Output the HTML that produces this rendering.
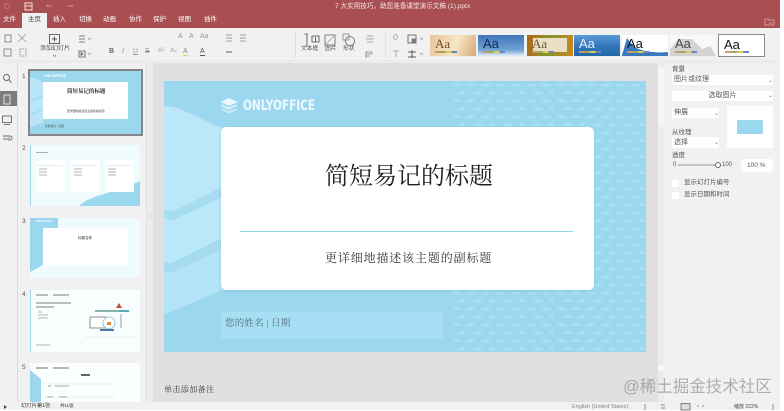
<!DOCTYPE html>
<html><head><meta charset="utf-8">
<style>
*{box-sizing:border-box}
html,body{margin:0;padding:0;width:784px;height:411px;overflow:hidden;background:#fff}
body{position:relative;font-family:"Liberation Sans","Noto Sans CJK SC",sans-serif;color:#444}
div,span,svg{position:absolute}
#w{left:0;top:0;width:784px;height:411px;overflow:hidden;filter:blur(.3px)}
.t{white-space:nowrap;line-height:1}
.tab{top:16px;font-size:6.5px;color:#fff;white-space:nowrap;line-height:8px}
.tl{font-size:6.5px;color:#555;white-space:nowrap;line-height:8px}
.th{top:35px;width:46px;height:21px;overflow:hidden}
.aa{left:5px;top:2px;font-size:13px;line-height:14px;color:#111}
.bar{height:2px;left:5px;width:22px;top:16px;background:linear-gradient(90deg,#c96 0 25%,#9a6 25% 50%,#dc5 50% 75%,#68b 75%)}
.dd{background:#fff;height:11px;font-size:7px;line-height:11px;color:#555;padding-left:2px;white-space:nowrap}
.chev{font-size:6px;color:#777;line-height:8px}
.card{background:#fff}
svg{overflow:visible}
</style></head><body><div id="w">

<!-- Header -->
<div style="left:0;top:0;width:780px;height:28px;background:#a94f51"></div>
<div style="left:22px;top:13px;width:25px;height:15px;background:#f1f1f1"></div>
<div class="tab" style="left:3px">文件</div>
<div class="tab" style="left:28px;color:#444">主页</div>
<div class="tab" style="left:53px">插入</div>
<div class="tab" style="left:79px">切换</div>
<div class="tab" style="left:103px">动画</div>
<div class="tab" style="left:129px">协作</div>
<div class="tab" style="left:153px">保护</div>
<div class="tab" style="left:178px">视图</div>
<div class="tab" style="left:204px">插件</div>
<div class="t" style="left:335px;top:3px;width:130px;font-size:6.6px;line-height:7px;color:#f6e6e6">7 大实用技巧，助您准备课堂演示文稿 (1).pptx</div>
<svg style="left:0;top:0" width="90" height="14" fill="none" stroke="#e6c9c9" stroke-width="1">
<circle cx="7" cy="6" r="2.5" stroke="#bf7b7c"/>
<rect x="25" y="3" width="7" height="7" stroke="#f3e2e2"/><path d="M25 6h7" stroke="#f3e2e2"/>
<path d="M46 6h6M46 6l2-1" stroke="#c98e8f"/><path d="M73 6h-6M73 6l-2-1" stroke="#c98e8f"/>
</svg>
<svg style="left:764px;top:18px" width="12" height="8" fill="none" stroke="#d9b2b2" stroke-width=".8"><path d="M1 1h3l1 1h5v5H1z"/><path d="M5 5h3"/></svg>

<!-- Toolbar -->
<div style="left:0;top:28px;width:780px;height:34px;background:#f1f1f1"></div>
<div style="left:0;top:60px;width:780px;height:3px;background:#ececec"></div>
<div style="left:153px;top:63px;width:505px;height:339px;background:#e0e0e0"></div>
<div style="left:0;top:63px;width:153px;height:339px;background:#f1f1f1"></div>
<div style="left:658px;top:63px;width:122px;height:339px;background:#f1f1f1"></div>
<div style="left:0;top:402px;width:780px;height:8px;background:#f1f1f1"></div>

<svg style="left:0;top:28px" width="430" height="34" fill="none" stroke="#777" stroke-width=".8">
<rect x="5" y="7" width="6" height="7"/><path d="M18 6l8 8M26 6l-8 8" stroke="#999"/>
<rect x="4" y="21" width="7" height="7"/><rect x="20" y="21" width="6" height="7" stroke-dasharray="1.5 1"/>
<rect x="49.500" y="6.500" width="10" height="9" stroke="#444"/><path d="M54.500 8.500v5M52 11h5" stroke="#333"/>
<path d="M53 27l1.500 1.500L56 27" stroke="#888"/>
<path d="M79 8h6M79 11h6M79 14h6" stroke="#555"/><path d="M79 23h6v6h-6z" stroke="#555"/><path d="M81 24.500l2 1.500-2 1.500z" fill="#555"/>
<path d="M88 10l1.500 1.500L91 10M88 25l1.500 1.500L91 25" stroke="#999"/>
<path d="M226 7h6M226 10h6M226 13h6M240 7h6M240 10h6M240 13h6" stroke="#888"/>
<path d="M226 24h6" stroke="#aaa" stroke-width="2"/>
<path d="M305 6h2v12h-2M304.500 6h2M312 8h7v6h-7zM315.500 9v5" stroke="#444"/>
<rect x="325" y="7" width="10" height="10" stroke="#666"/><path d="M326 16l8-8" stroke="#999"/>
<rect x="343" y="6" width="6" height="6" stroke="#888"/><circle cx="350" cy="13" r="4.500" stroke="#666"/>
<path d="M367 8h6M366 11h8M367 14h6" stroke="#888"/><path d="M366 23v7M366 24h6v2h-6M366 28h4" stroke="#888"/>
<path d="M393 9l3-3 2 3-3 3z" stroke="#aaa"/><path d="M393 23h6M396 23v6" stroke="#999"/>
<rect x="408" y="7" width="8" height="8" stroke="#555"/><rect x="412" y="11" width="4" height="4" fill="#777"/>
<path d="M412 22v8M408 24h8M408 29h8" stroke="#333"/>
<path d="M420 10l1.500 1.500L423 10M420 25l1.500 1.500L423 25" stroke="#999"/>
<path d="M295.500 4v26M385.500 4v26" stroke="#dcdcdc"/>
</svg>
<div class="tl" style="left:40px;top:45px;font-size:6px">添加幻灯片</div>
<div class="t" style="left:109px;top:48px;font-size:7px;font-weight:bold;color:#666">B</div>
<div class="t" style="left:122px;top:48px;font-size:7px;font-style:italic;color:#999">I</div>
<div class="t" style="left:133px;top:48px;font-size:7px;text-decoration:underline;color:#999">U</div>
<div class="t" style="left:145px;top:48px;font-size:7px;text-decoration:line-through;color:#888">S</div>
<div class="t" style="left:158px;top:48px;font-size:6.500px;color:#999">A²</div>
<div class="t" style="left:170px;top:48px;font-size:6.500px;color:#999">A₂</div>
<div class="t" style="left:183px;top:48px;font-size:7px;color:#888;border-bottom:1px solid #dd5">A</div>
<div class="t" style="left:200px;top:48px;font-size:7px;color:#555;border-bottom:1px solid #555">A</div>
<div class="t" style="left:178px;top:33px;font-size:7px;color:#999">A</div>
<div class="t" style="left:189px;top:33px;font-size:7px;color:#999">A</div>
<div class="t" style="left:200px;top:33px;font-size:7px;color:#999">Aa</div>
<div class="tl" style="left:301px;top:45px;font-size:5.800px">文本框</div>
<div class="tl" style="left:325px;top:45px;font-size:5.800px">图片</div>
<div class="tl" style="left:343px;top:45px;font-size:5.800px">形状</div>

<!-- Themes -->
<div class="th" style="left:430px;background:linear-gradient(110deg,#e8c49c,#f7e6c4 55%,#d9a97c)"><span class="aa" style="color:#7a4a2a;font-family:'Liberation Serif',serif">Aa</span><span class="bar"></span></div>
<div class="th" style="left:478px;background:linear-gradient(180deg,#3f74b8,#6fa0d4 70%,#e4eef6)"><span class="aa" style="color:#0c2a55">Aa</span><span class="bar"></span></div>
<div class="th" style="left:527px;background:linear-gradient(100deg,#b5641a,#86952d 45%,#c9841d)"><div style="left:6px;top:3px;width:34px;height:14px;background:#eadfc5"></div><span class="aa" style="color:#6d5a3a;font-family:'Liberation Serif',serif">Aa</span><span class="bar"></span></div>
<div class="th" style="left:574px;background:linear-gradient(180deg,#5c9ad6,#2e74b8 60%,#2268a8)"><span class="aa" style="color:#e8f2fb">Aa</span><span class="bar"></span></div>
<div class="th" style="left:622px;background:#fff"><svg style="left:0;top:0" width="46" height="21"><path d="M0 20L5 3 12 12Q25 19 46 17v4H0z" fill="#3a78c0"/></svg><span class="aa">Aa</span><span class="bar"></span></div>
<div class="th" style="left:670px;background:#f8f8f8"><svg style="left:0;top:0" width="46" height="21"><path d="M0 14L8 4h14l10 10 8-3 6 10H0z" fill="#d3d3d3"/></svg><span class="aa" style="color:#444">Aa</span><span class="bar"></span></div>
<div style="left:718px;top:34px;width:47px;height:23px;background:#fff;border:1px solid #8a8a8a"><span class="aa" style="color:#111;left:5px;top:3px">Aa</span><span class="bar" style="top:16px;left:6px;width:24px"></span></div>

<!-- Left rail -->
<div style="left:17px;top:63px;width:1px;height:339px;background:#dcdcdc"></div>
<div style="left:0;top:91px;width:17px;height:15px;background:#7c7c7c"></div>
<svg style="left:0;top:70px" width="17" height="80" fill="none" stroke="#666" stroke-width=".9">
<circle cx="6.500" cy="7.500" r="3"/><path d="M9 10l2.500 2.500"/>
<rect x="4" y="25" width="6" height="9" stroke="#eee"/>
<rect x="2.500" y="46" width="9" height="6.500"/><path d="M4 54.500h6"/>
<path d="M3 66h5M3 69h5M9 65v6M10 66a2 2 0 010 4"/>
</svg>

<!-- Thumbs -->
<div style="left:146px;top:63px;width:7px;height:339px;background:#eee"></div>
<div style="left:146px;top:63px;width:1px;height:339px;background:#dcdcdc"></div>
<div class="tl" style="left:22px;top:73px;font-size:6.500px">1</div>
<div class="tl" style="left:22px;top:145px;font-size:6.500px">2</div>
<div class="tl" style="left:22px;top:218px;font-size:6.500px">3</div>
<div class="tl" style="left:22px;top:291px;font-size:6.500px">4</div>
<div class="tl" style="left:22px;top:364px;font-size:6.500px">5</div>

<div style="left:28px;top:69px;width:115px;height:67px;border:2px solid #858585;background:#9bd8f0"></div>
<svg style="left:30px;top:71px" width="111" height="63"><path d="M0 6q3 0 13 5v41L0 56z" fill="#b9e5f6"/><path d="M0 30L13 25M0 44L13 38" stroke="#a3dbf1" stroke-width="1.500"/></svg>
<div style="left:43px;top:82px;width:85px;height:37px;background:#fff"></div>
<div class="t" style="left:67px;top:90px;font-size:5.500px;font-weight:bold;color:#222;font-family:'Liberation Serif','Noto Serif CJK SC',serif">简短易记的标题</div>
<div class="t" style="left:67px;top:110px;font-size:2.900px;color:#444">更详细地描述该主题的副标题</div>
<div class="t" style="left:44px;top:75px;font-size:3.500px;font-weight:bold;color:#fff">ONLYOFFICE</div>
<div class="t" style="left:45px;top:125px;font-size:2.800px;color:#555">您的姓名 | 日期</div>

<div style="left:30px;top:145px;width:110px;height:61px;background:#effbfc"></div>
<svg style="left:30px;top:145px" width="110" height="61"><path d="M49 61Q56 54 74 49L103 39l7-3v25z" fill="#9bd8f0"/><path d="M.5 0v61" stroke="#9bd8f0"/></svg>
<div class="card" style="left:36px;top:160px;width:29px;height:32px"></div>
<div class="card" style="left:71px;top:160px;width:29px;height:32px"></div>
<div class="card" style="left:105px;top:160px;width:29px;height:32px"></div>
<svg style="left:30px;top:145px" width="110" height="61" fill="none"><path d="M7 20.500h25M42 20.500h25M77 20.500h25" stroke="#b9e2ee" stroke-width=".6"/><path d="M9 24h8M9 27h8M9 30h8M44 24h8M44 27h8M44 30h8M78 24h8M78 27h8M78 30h8M6 7.500h12" stroke="#999" stroke-width=".7"/></svg>

<div style="left:30px;top:218px;width:110px;height:60px;background:#effbfc"></div>
<svg style="left:30px;top:218px" width="110" height="60"><path d="M0 0h28v11H13v36L0 54z" fill="#9bd8f0"/></svg>
<div class="card" style="left:43px;top:228px;width:85px;height:37px"></div>
<div class="t" style="left:78px;top:237px;font-size:3.500px;color:#333">标题名称</div>
<div class="t" style="left:36px;top:221px;font-size:2.500px;font-weight:bold;color:#fff">ONLYOFFICE</div>

<div style="left:30px;top:290px;width:110px;height:62px;background:#f8fdfe;border-left:1px solid #9bd8f0"></div>
<svg style="left:30px;top:290px" width="110" height="62" fill="none" stroke-width=".8">
<path d="M6 5h12M23 5h16M6 13h35M6 17h18" stroke="#555"/><path d="M8 22h4M8 25h10M8 28h10M6 55h14" stroke="#999"/>
<path d="M65 21h24" stroke="#5a9e8f" stroke-width="1.500"/><path d="M86 18l3-5 3 5z" fill="#c6483c" stroke="none"/><path d="M89 21h10" stroke="#5ab" stroke-width="2"/>
<rect x="60" y="27" width="16" height="11" stroke="#777" fill="#fff"/><circle cx="79" cy="33" r="6" stroke="#7bc" fill="#fff"/><path d="M77 32h4v3h-4z" fill="#e08a3a" stroke="none"/>
<path d="M70 40h14" stroke="#47a" stroke-width="2"/><path d="M91 24v14" stroke="#888"/><path d="M55 47h50" stroke="#eee" stroke-width="1"/>
</svg>

<div style="left:30px;top:363px;width:110px;height:39px;background:#fbfeff"></div>
<svg style="left:30px;top:363px" width="110" height="39"><path d="M0 7l11 9v23H0z" fill="#9bd8f0"/><path d="M6 5h12M23 5h16" stroke="#444" stroke-width=".8"/><path d="M51 12h9" stroke="#333" stroke-width="1.500"/><path d="M14 21h72M14 34h72" stroke="#eee"/><path d="M18 23h3M25 23h14M17 34h6M29 34h8" stroke="#888" stroke-width=".8"/></svg>

<div style="left:146px;top:212px;width:7px;height:8px;background:#e6e6e6"></div>

<!-- Slide -->
<div style="left:164px;top:81px;width:482px;height:271px;background:#9bd8f0;overflow:hidden">
<svg style="left:0;top:0" width="482" height="271">
<defs><pattern id="p" width="30" height="16" patternUnits="userSpaceOnUse"><ellipse cx="7" cy="4" rx="4.500" ry="1.500" fill="#a9e0f5"/><ellipse cx="22" cy="4" rx="4.500" ry="1.500" fill="#a9e0f5"/><ellipse cx="14" cy="12" rx="4.500" ry="1.500" fill="#a9e0f5"/><ellipse cx="29" cy="12" rx="4.500" ry="1.500" fill="#a9e0f5"/></pattern></defs>
<rect x="289" y="3" width="193" height="268" fill="url(#p)"/>
<path d="M0 25Q8 25 16 28L60 48V208L0 234z" fill="#bce7f8"/>
<path d="M0 129Q5 132 12 129L60 105v10L12 138Q5 140 0 137z" fill="#a5dcf2"/>
<path d="M0 181Q5 184 12 180L60 156v11L12 190Q5 192 0 190z" fill="#a5dcf2"/>
<path d="M0 190Q5 192 12 190L60 167v41L0 234z" fill="#b3e3f6"/>
</svg>
<div style="left:57px;top:231px;width:222px;height:27px;background:#a8dff4;border-radius:3px"></div>
</div>
<div style="left:221px;top:127px;width:373px;height:163px;background:#fff;border-radius:5px;box-shadow:0 1px 3px rgba(100,170,200,.35)"></div>
<div class="t" style="left:325px;top:165px;font-size:24px;line-height:25px;color:#222;font-family:'Liberation Serif','Noto Serif CJK SC',serif">简短易记的标题</div>
<div style="left:240px;top:231px;width:333px;height:1px;background:#8fd8f0"></div>
<div class="t" style="left:325px;top:252px;font-size:12px;letter-spacing:.86px;color:#333;font-family:'Liberation Serif','Noto Serif CJK SC',serif">更详细地描述该主题的副标题</div>
<div class="t" style="left:225px;top:320px;font-size:9.500px;letter-spacing:.2px;color:#4e6a78;font-family:'Liberation Serif','Noto Serif CJK SC',serif">您的姓名 | 日期</div>
<svg style="left:220px;top:98px" width="18" height="16" fill="#e9f7fd"><path d="M9 0l8.500 4L9 8 .5 4z"/><path d="M2.500 6.700L9 9.800l6.500-3.100 2 1.100L9 11.800.5 7.800z" opacity=".85"/><path d="M2.500 10.400L9 13.500l6.500-3.100 2 1.100L9 15.500.5 11.500z" opacity=".6"/></svg>
<div class="t" style="left:243px;top:99px;font-size:14px;line-height:15px;font-weight:bold;color:#eef9fe;font-family:'DejaVu Sans','Liberation Sans',sans-serif;transform-origin:0 0;transform:scaleX(.75)">ONLYOFFICE</div>

<div class="t" style="left:164px;top:386px;font-size:8px;letter-spacing:.4px;color:#333;font-family:'Liberation Serif','Noto Serif CJK SC',serif">单击添加备注</div>

<!-- Editor scrollbar -->
<div style="left:658px;top:63px;width:6px;height:339px;background:#ececec"></div>
<div style="left:658px;top:67px;width:6px;height:60px;background:#f5f5f5"></div>
<div style="left:658px;top:365px;width:6px;height:6px;background:#f8f8f8"></div>

<!-- Right panel -->
<div class="tl" style="left:672px;top:66px;color:#444">背景</div>
<div class="dd" style="left:672px;top:75px;width:101px;height:10px;line-height:10px;color:#555">图片或纹理</div>
<div class="chev" style="left:768px;top:77px">⌄</div>
<div class="dd" style="left:672px;top:91px;width:101px;height:10px;line-height:10px;text-align:center;padding:0">选取图片</div>
<div class="chev" style="left:768px;top:92px">⌄</div>
<div class="dd" style="left:672px;top:108px;width:47px;height:10px;line-height:10px">伸展</div>
<div class="chev" style="left:714px;top:110px">⌄</div>
<div style="left:727px;top:106px;width:46px;height:42px;background:#fff"></div>
<div style="left:737px;top:120px;width:26px;height:14px;background:#9bd8f0"></div>
<div class="tl" style="left:672px;top:129px">从纹理</div>
<div class="dd" style="left:672px;top:137px;width:47px;height:11px">选择</div>
<div class="chev" style="left:714px;top:139px">⌄</div>
<div class="tl" style="left:672px;top:152px">透度</div>
<div class="tl" style="left:673px;top:161px;font-size:6px">0</div>
<div style="left:678px;top:164px;width:40px;height:2px;background:#c4c4c4"></div>
<div style="left:715px;top:162px;width:6px;height:6px;border-radius:50%;background:#fff;border:1px solid #666"></div>
<div class="tl" style="left:722px;top:161px;font-size:6px">100</div>
<div class="dd" style="left:741px;top:159px;width:32px;height:13px;line-height:13px;border-radius:3px;font-size:6.500px;padding-left:6px">100 %</div>
<div style="left:672px;top:180px;width:7px;height:7px;background:#fff"></div>
<div class="tl" style="left:684px;top:179px;font-size:6.500px">显示幻灯片编号</div>
<div style="left:672px;top:192px;width:7px;height:7px;background:#fff"></div>
<div class="tl" style="left:684px;top:191px;font-size:6.500px">显示日期和时间</div>

<!-- Status bar -->
<div class="tl" style="left:21px;top:403px;font-size:5.300px;line-height:6px;color:#333">幻灯片第1张</div>
<div class="tl" style="left:60px;top:403px;font-size:4.500px;line-height:6px;color:#333">共11张</div>
<svg style="left:4px;top:405px" width="12" height="5"><path d="M0 0l3 2-3 2z" fill="#444"/></svg>
<div class="tl" style="left:572px;top:404px;font-size:5.500px;line-height:6px;color:#888">English (United States)</div>
<div class="tl" style="left:734px;top:404px;font-size:5px;line-height:6px;color:#444">缩放 222%</div>
<svg style="left:640px;top:403px" width="140" height="7" fill="none" stroke="#666" stroke-width=".7"><path d="M5 1v6M21 2h4M21 5h4"/><rect x="41" y="0.500" width="9" height="6.500" stroke="#555" fill="#ddd"/><path d="M57 3h2M62 3h2M133 1v6"/></svg>

<!-- Watermark -->
<div class="t" style="left:623px;top:378px;font-size:16.500px;line-height:18px;color:rgba(120,120,120,.55);font-family:'Liberation Sans','Noto Sans CJK SC',sans-serif">@稀土掘金技术社区</div>

</div></body></html>
